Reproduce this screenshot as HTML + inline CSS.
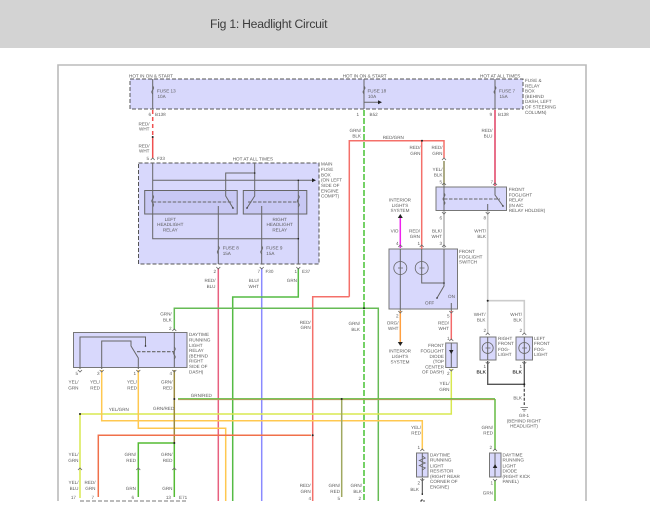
<!DOCTYPE html>
<html>
<head>
<meta charset="utf-8">
<style>
html,body{margin:0;padding:0;background:#fff;width:650px;height:518px;overflow:hidden}
#hd{position:absolute;left:0;top:0;width:650px;height:48px;background:#d3d3d3}
#ti{position:absolute;left:210px;top:15px;font:12.2px/18px "Liberation Sans",sans-serif;letter-spacing:-.25px;color:#3c3c3c}
svg{position:absolute;left:0;top:0;filter:blur(.35px)}
text{font-family:"Liberation Sans",sans-serif;font-size:4.6px;fill:#5c5c5c;text-rendering:geometricPrecision}
.e{text-anchor:end}.m{text-anchor:middle}
.b{font-weight:bold;fill:#333}
</style>
</head>
<body>
<div id="hd"></div>
<div id="ti">Fig 1: Headlight Circuit</div>
<svg width="650" height="518" viewBox="0 0 650 518">
<path d="M58 501V65H586V501" fill="none" stroke="#bbb" stroke-width="1.6"/>
<!-- boxes -->
<g fill="#d8d8fc" stroke="#555" stroke-width="1">
<rect x="130" y="79" width="393" height="30" stroke-dasharray="4 2"/>
<rect x="138.5" y="163" width="180.5" height="101" stroke-dasharray="4 2"/>
<rect x="73.5" y="332.5" width="113.5" height="35" stroke="#777"/>
<rect x="389" y="249" width="68.5" height="60" stroke="#777"/>
<rect x="436" y="187" width="70.5" height="23.5" stroke="#777"/>
<rect x="480" y="337" width="16" height="23" stroke="#777"/>
<rect x="516" y="337" width="16.5" height="23" stroke="#777"/>
<rect x="445.7" y="343" width="11.5" height="24.5" stroke="#777"/>
<rect x="416.5" y="453" width="11.5" height="24" stroke="#777"/>
<rect x="489.5" y="453" width="11.5" height="24" stroke="#777"/>
</g>
<g fill="#c8c8f4" stroke="#666" stroke-width="1">
<rect x="144.7" y="190.5" width="92.5" height="23.5"/>
<rect x="243.3" y="190.5" width="63.5" height="23.5"/>
</g>
<!-- coloured wires -->
<g fill="none" stroke-width="1.5">
<path stroke="#f05050" d="M152.7 137V158"/>
<path stroke="#f05050" stroke-dasharray="4 3" d="M152.7 110V136"/>
<path stroke="#e8607f" d="M218.3 268V501"/>
<path stroke="#8a8aff" d="M261.7 268V501"/>
<path stroke="#55bb44" d="M298.3 268V297H232.7V501"/>
<path stroke="#f4706a" d="M349.3 296.7V140.7H444V158M349.3 296.7H312.7V501"/>
<path stroke="#f4706a" d="M421.7 141V249"/>
<path stroke="#e8e04a" d="M444 161V185"/>
<path stroke="#e8708a" stroke-width="2" d="M495 110V186"/>
<path stroke="#66cc55" stroke-width="1.8" stroke-dasharray="6 2" d="M364 110V501"/>
<path stroke="#66bb55" d="M174.3 330V308.3H378.3V501"/>
<path stroke="#ee22ee" d="M400.3 218V248"/>
<path stroke="#bbb" stroke-width="1.7" d="M444 211V249"/>
<path stroke="#ccc" stroke-width="1.6" d="M487.7 211V334M487.7 300.7H524.3V334"/>
<path stroke="#ffa040" d="M400.3 311V342"/>
<path stroke="#f46a6a" d="M451.3 311V340"/>
<path stroke="#d8e850" d="M451.3 369V414H80V498"/>
<path stroke="#ffc850" d="M101.7 370V420.7H422.3V450"/>
<path stroke="#ffc850" d="M138.3 370V428.3H225.7V501"/>
<path stroke="#9a8a40" d="M174.3 370V443"/>
<path stroke="#55bb33" d="M174.3 443V497M138.3 497V443H174.3"/>
<path stroke="#c09a60" d="M178 399.4H495"/>
<path stroke="#66bb44" stroke-width="1.1" d="M178 398.7H495"/>
<path stroke="#66bb44" d="M495 399V450M495 480V501"/>
<path stroke="#a0a860" d="M341.7 400V497"/>
<path stroke="#f0704a" d="M98.3 497V435.3H311"/>
</g>
<!-- grey wires -->
<g fill="none" stroke="#666" stroke-width="1">
<path d="M152.7 79V109M364 79V109M495 79V109M364 102.3H378"/>
<path d="M152.7 163V238.7H298.3M152.7 180.3H312M298.3 180.3V264M254.7 163V196L247 208M254.7 173H225.7V196L233 208"/>
<path d="M152.7 202H233M248 202H298" stroke-dasharray="3.5 1.5"/>
<path d="M218.3 206V264M261.7 206V264"/>
<path d="M80 369V337H145.5V346M101.7 369V341H131V346L138.3 358V369M174.3 332V367.5"/>
<path d="M137 351.7H174" stroke-dasharray="3.5 1.5" stroke-width="1.2"/>
<path d="M444 161V211M495 187V195L503 206M487.7 204V211"/>
<path d="M444 199H500" stroke-dasharray="3.5 1.5"/>
<path d="M400.3 249V311M421.7 249V283H444M444 249V286L437 298M451.3 303V311"/>
<path d="M451.3 343V367.5M422.3 453V477M495 453V477"/>
<path d="M487.7 337V360M524.3 337V360"/>
<path stroke="#555" stroke-width="1.3" d="M487.7 361V384.3H524.3V361"/>
<path stroke="#555" stroke-width="1.3" stroke-dasharray="3 1.5" d="M524.3 384.3V405"/>
<path stroke="#444" d="M422.3 478V495M421 500H423"/>
</g>
<!-- lamps -->
<g fill="none" stroke="#666" stroke-width=".8">
<circle cx="400.3" cy="268" r="6.5"/><circle cx="421.7" cy="268" r="6.5"/>
<circle cx="487.7" cy="348" r="5.5"/><circle cx="524.3" cy="348" r="5.5"/>
<path d="M398 268h5M419.5 268h5M485.5 348h5M522 348h5"/>
<path d="M520.5 407.5h7.5M522 409.5h4.5M523.3 411h2"/>
<path d="M152.7 86q2 2 0 4t0 4M364 86q2 2 0 4t0 4M495 86q2 2 0 4t0 4M218.3 246q2 2 0 4t0 4M261.7 246q2 2 0 4t0 4M152.7 195q2 2 0 4t0 4t0 4M298.3 195q2 2 0 4t0 4t0 4M174.3 347q2 2 0 4t0 4t0 4M444 193q2 2 0 4t0 4t0 4M422.3 456l3 2l-6 2.5l6 2.5l-6 2.5l6 2.5l-3 2"/>
<!-- connector chevrons -->
<path d="M150.7 160l2-2l2 2M216.3 267l2 2l2-2M259.7 267l2 2l2-2M296.3 267l2 2l2-2M398.3 247l2-2l2 2M419.7 247l2-2l2 2M442 247l2-2l2 2M442 185l2-2l2 2M493 185l2-2l2 2M442 212l2 2l2-2M485.7 212l2 2l2-2M398.3 311l2 2l2-2M449.3 311l2 2l2-2M449.3 341l2-2l2 2M449.3 369l2 2l2-2M78 370l2 2l2-2M99.7 370l2 2l2-2M136.3 370l2 2l2-2M172.3 370l2 2l2-2M172.3 331l2-2l2 2M485.7 335l2-2l2 2M522.3 335l2-2l2 2M485.7 362l2 2l2-2M522.3 362l2 2l2-2M420.3 451l2-2l2 2M493 451l2-2l2 2M420.3 479l2 2l2-2M493 479l2 2l2-2M442 160l2-2l2 2M78 470l2-2l2 2M136.3 470l2-2l2 2M172.3 470l2-2l2 2"/>
</g>
<!-- nodes -->
<g fill="#222">
<path d="M312 178.3l4 2l-4 2zM378 100.3l4 2l-4 2z"/>
<path d="M397.8 218l2.500-4l2.500 4zM397.8 342l2.500 4l2.500-4zM449 350h4.500l-2.200 4zM492.800 468h4.500l-2.200-4z"/>
<circle cx="152.7" cy="137" r="1"/><circle cx="422" cy="140.7" r="1"/><circle cx="487.7" cy="300.7" r="1"/><circle cx="524.3" cy="384.3" r="1"/>
<circle cx="364" cy="308.3" r="1"/><circle cx="174.3" cy="399" r="1"/><circle cx="80" cy="414" r="1"/><circle cx="341.7" cy="399" r="1"/><circle cx="174.3" cy="443" r="1"/><circle cx="312.7" cy="435.3" r="1"/>
<circle cx="298.3" cy="238.7" r=".8"/><circle cx="254.7" cy="173" r=".8"/><circle cx="298.3" cy="180.3" r=".8"/><circle cx="444" cy="283" r=".8"/>
<circle cx="145.5" cy="346" r=".8"/><circle cx="233" cy="208" r=".8"/><circle cx="247" cy="208" r=".8"/><circle cx="503" cy="206" r=".8"/><circle cx="437" cy="298" r=".8"/><circle cx="422.3" cy="494" r=".8"/>
</g>
<!-- bottom dashed box edge -->
<path d="M80 501H186" stroke="#777" stroke-width="1" stroke-dasharray="4 2" fill="none"/>
<path d="M420 501h5" stroke="#555" stroke-width="1" stroke-dasharray="2 1" fill="none"/>
<!-- labels -->
<text x="129" y="77.5">HOT IN ON &amp; START</text>
<text x="342.7" y="77.5">HOT IN ON &amp; START</text>
<text x="480" y="77.5">HOT AT ALL TIMES</text>
<text x="157" y="92.5">FUSE 13</text><text x="157.5" y="98">10A</text>
<text x="367.5" y="92.5">FUSE 18</text><text x="368" y="98">10A</text>
<text x="499" y="92.5">FUSE 7</text><text x="499.5" y="98">15A</text>
<text class="e" x="151" y="116">6</text><text x="155" y="116">B138</text>
<text class="e" x="359" y="116">1</text><text x="369.5" y="116">B52</text>
<text class="e" x="492" y="116">9</text><text x="498" y="116">B138</text>
<text x="525" y="82">FUSE &amp;</text><text x="525" y="87.5">RELAY</text><text x="525" y="92.5">BOX</text><text x="525" y="98">(BEHIND</text><text x="525" y="103">DASH, LEFT</text><text x="525" y="108.5">OF STEERING</text><text x="525" y="114">COLUMN)</text>
<text class="e" x="149.5" y="125.5">RED/</text><text class="e" x="149.5" y="130.5">WHT</text>
<text class="e" x="149.5" y="147.5">RED/</text><text class="e" x="149.5" y="152.5">WHT</text>
<text class="e" x="149" y="160">5</text><text x="157" y="160">F33</text>
<text x="232.7" y="160.5">HOT AT ALL TIMES</text>
<text x="321" y="165.5">MAIN</text><text x="321" y="171">FUSE</text><text x="321" y="176.5">BOX</text><text x="321" y="181.7">(ON LEFT</text><text x="321" y="187">SIDE OF</text><text x="321" y="192.5">ENGINE</text><text x="321" y="197.5">COMPT)</text>
<text class="m" x="170.3" y="221">LEFT</text><text class="m" x="170.3" y="226">HEADLIGHT</text><text class="m" x="170.3" y="231.5">RELAY</text>
<text class="m" x="279.7" y="221">RIGHT</text><text class="m" x="279.7" y="226">HEADLIGHT</text><text class="m" x="279.7" y="231.5">RELAY</text>
<text x="222.7" y="249.5">FUSE 8</text><text x="222.7" y="255">15A</text>
<text x="266.3" y="249.5">FUSE 9</text><text x="266.3" y="255">15A</text>
<text class="e" x="216" y="273">2</text><text class="e" x="260" y="273">7</text><text x="265.5" y="273">F30</text><text class="e" x="297" y="273">1</text><text x="302" y="273">E37</text>
<text class="e" x="215.5" y="282">RED/</text><text class="e" x="215.5" y="288">BLU</text>
<text class="e" x="259" y="282">BLU/</text><text class="e" x="259" y="288">WHT</text>
<text class="e" x="297" y="282">GRN</text>
<text class="e" x="361" y="132">GRN/</text><text class="e" x="361" y="137.5">BLK</text>
<text x="382.7" y="139">RED/GRN</text>
<text class="e" x="420.5" y="149">RED/</text><text class="e" x="420.5" y="155">GRN</text>
<text class="e" x="442.5" y="149">RED/</text><text class="e" x="442.5" y="155">GRN</text>
<text class="e" x="442.5" y="171">YEL/</text><text class="e" x="442.5" y="176.5">BLK</text>
<text class="e" x="492.5" y="132">RED/</text><text class="e" x="492.5" y="137.5">BLU</text>
<text class="e" x="442" y="183.5">5</text><text class="e" x="493" y="183.5">7</text>
<text x="508.7" y="191">FRONT</text><text x="508.7" y="196.5">FOGLIGHT</text><text x="508.7" y="201.5">RELAY</text><text x="508.7" y="207">(IN A/C</text><text x="508.7" y="212">RELAY HOLDER)</text>
<text class="e" x="442" y="219.5">6</text><text class="e" x="486" y="219.5">8</text>
<text class="m" x="400" y="201.5">INTERIOR</text><text class="m" x="400" y="207">LIGHTS</text><text class="m" x="400" y="212">SYSTEM</text>
<text class="e" x="398.5" y="232.5">VIO</text>
<text class="e" x="420" y="232.5">RED/</text><text class="e" x="420" y="238">GRN</text>
<text class="e" x="442" y="232.5">BLK/</text><text class="e" x="442" y="238">WHT</text>
<text class="e" x="486" y="232.5">WHT/</text><text class="e" x="486" y="238">BLK</text>
<text class="e" x="398.5" y="245">4</text><text class="e" x="420" y="245">1</text><text class="e" x="442" y="245">3</text>
<text x="459" y="253">FRONT</text><text x="459" y="258.5">FOGLIGHT</text><text x="459" y="263.5">SWITCH</text>
<text x="425" y="304.5">OFF</text><text x="448" y="298">ON</text>
<text class="e" x="398.5" y="317.5">2</text><text class="e" x="449.5" y="317.5">5</text>
<text class="e" x="398.5" y="324.5">ORG/</text><text class="e" x="398.5" y="330">WHT</text>
<text class="e" x="449" y="324.5">RED/</text><text class="e" x="449" y="330">WHT</text>
<text class="e" x="449.5" y="340">1</text>
<text class="m" x="400" y="352.5">INTERIOR</text><text class="m" x="400" y="358">LIGHTS</text><text class="m" x="400" y="363.5">SYSTEM</text>
<text class="e" x="444" y="347">FRONT</text><text class="e" x="444" y="352.5">FOGLIGHT</text><text class="e" x="444" y="358">DIODE</text><text class="e" x="444" y="363">(TOP</text><text class="e" x="444" y="368.5">CENTER</text><text class="e" x="444" y="373.5">OF DASH)</text>
<text class="e" x="449.5" y="375">2</text>
<text class="e" x="449.5" y="385">YEL/</text><text class="e" x="449.5" y="391">GRN</text>
<text class="e" x="485.5" y="316">WHT/</text><text class="e" x="485.5" y="321.7">BLK</text>
<text class="e" x="522" y="316">WHT/</text><text class="e" x="522" y="321.7">BLK</text>
<text class="e" x="486" y="332">2</text><text class="e" x="522" y="332">2</text>
<text x="498" y="340">RIGHT</text><text x="498" y="345">FRONT</text><text x="498" y="351">FOG-</text><text x="498" y="356">LIGHT</text>
<text x="534" y="340">LEFT</text><text x="534" y="345">FRONT</text><text x="534" y="351">FOG-</text><text x="534" y="356">LIGHT</text>
<text class="e" x="486" y="368">1</text><text class="e" x="522" y="368">1</text>
<text class="e b" x="486" y="373.5">BLK</text><text class="e b" x="522" y="373.5">BLK</text>
<text class="e" x="522" y="399.5">BLK</text>
<text class="m" x="524" y="417">G8-1</text><text class="m" x="524" y="422.5">(BEHIND RIGHT</text><text class="m" x="524" y="427.5">HEADLIGHT)</text>
<text class="e" x="360" y="325">GRN/</text><text class="e" x="360" y="331">BLK</text>
<text class="e" x="421" y="429">YEL/</text><text class="e" x="421" y="434.5">RED</text><text class="e" x="420" y="449">1</text>
<text x="430" y="456.5">DAYTIME</text><text x="430" y="461.5">RUNNING</text><text x="430" y="467.5">LIGHT</text><text x="430" y="472.5">RESISTOR</text><text x="430" y="478">(RIGHT REAR</text><text x="430" y="483">CORNER OF</text><text x="430" y="488.5">ENGINE)</text>
<text class="e" x="420" y="484.5">2</text><text class="e" x="419" y="491">BLK</text>
<text class="e" x="493" y="429">GRN/</text><text class="e" x="493" y="434.5">RED</text><text class="e" x="492" y="449">2</text>
<text x="502.5" y="456.5">DAYTIME</text><text x="502.5" y="461.5">RUNNING</text><text x="502.5" y="467.5">LIGHT</text><text x="502.5" y="472.5">DIODE</text><text x="502.5" y="478">(RIGHT KICK</text><text x="502.5" y="483">PANEL)</text>
<text class="e" x="493" y="484.5">1</text><text class="e" x="493" y="494.5">GRN</text>
<text class="e" x="362" y="487">GRN/</text><text class="e" x="362" y="493">BLK</text><text class="e" x="361" y="500">2</text>
<text class="e" x="171.7" y="315.5">GRN/</text><text class="e" x="171.7" y="321.5">BLK</text><text class="e" x="171.5" y="330">2</text>
<text class="e" x="310.7" y="324">RED/</text><text class="e" x="310.7" y="329">GRN</text>
<text x="189" y="336">DAYTIME</text><text x="189" y="341.5">RUNNING</text><text x="189" y="347">LIGHT</text><text x="189" y="352">RELAY</text><text x="189" y="357.5">(BEHIND</text><text x="189" y="362.5">RIGHT</text><text x="189" y="368">SIDE OF</text><text x="189" y="373.5">DASH)</text>
<text class="e" x="78" y="375">5</text><text class="e" x="99.5" y="375">3</text><text class="e" x="136" y="375">1</text><text class="e" x="172" y="375">4</text>
<text class="e" x="78.5" y="383.5">YEL/</text><text class="e" x="78.5" y="389.5">GRN</text>
<text class="e" x="100" y="383.5">YEL/</text><text class="e" x="100" y="389.5">RED</text>
<text class="e" x="137" y="383.5">YEL/</text><text class="e" x="137" y="389.5">RED</text>
<text class="e" x="172.5" y="383.5">GRN/</text><text class="e" x="172.5" y="389.5">RED</text>
<text x="190.7" y="397">GRN/RED</text><text x="108.7" y="411">YEL/GRN</text><text x="153" y="410">GRN/RED</text>
<text class="e" x="78.5" y="456">YEL/</text><text class="e" x="78.5" y="462">GRN</text>
<text class="e" x="136" y="456">GRN/</text><text class="e" x="136" y="462">RED</text>
<text class="e" x="172.5" y="456">GRN/</text><text class="e" x="172.5" y="462">RED</text>
<text class="e" x="78.5" y="484">YEL/</text><text class="e" x="78.5" y="490">BLU</text>
<text class="e" x="95.5" y="484">RED/</text><text class="e" x="95.5" y="490">GRN</text>
<text class="e" x="136" y="490">GRN</text><text class="e" x="172.5" y="490">GRN</text>
<text class="e" x="76" y="499">17</text><text class="e" x="94" y="499">7</text><text class="e" x="134" y="499">6</text><text class="e" x="171" y="499">13</text><text x="179" y="499">E71</text>
<text class="e" x="310.7" y="487">RED/</text><text class="e" x="310.7" y="493">GRN</text><text class="e" x="311" y="500">4</text>
<text class="e" x="340" y="487">GRN/</text><text class="e" x="340" y="493">RED</text><text class="e" x="340" y="500">5</text>
<!-- cover everything below the image crop -->
<rect x="0" y="502" width="650" height="16" fill="#fff"/>
</svg>
</body>
</html>
